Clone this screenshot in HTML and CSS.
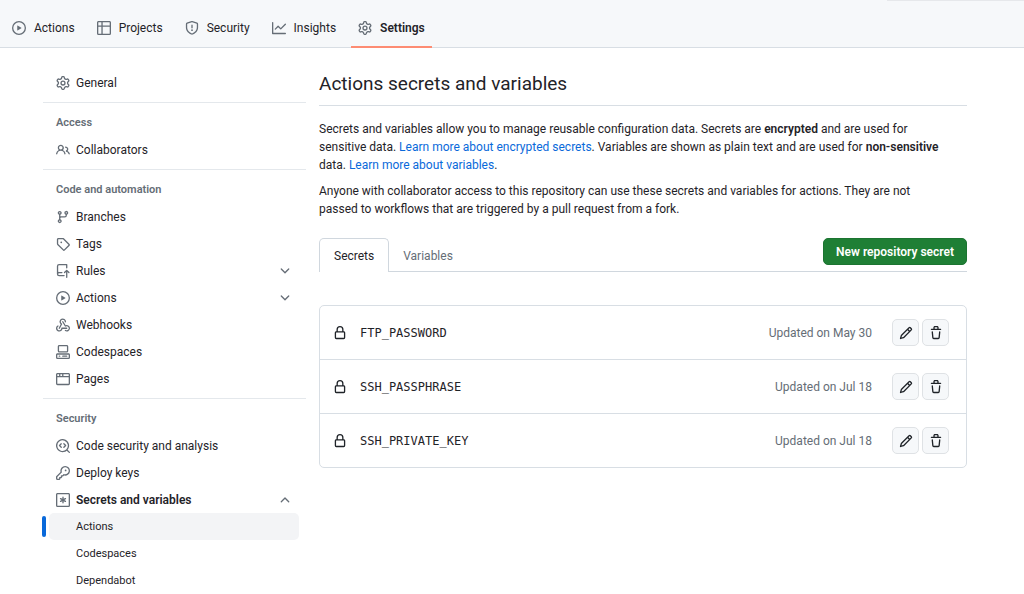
FILE: index.html
```
<!DOCTYPE html>
<html lang="en">
<head>
    <meta charset="UTF-8">
    <meta name="viewport" content="width=device-width, initial-scale=1.0">
    <title>Actions secrets and variables</title>
    <link rel="stylesheet" href="styles.css">
</head>
<body>
    <!-- icon sprite -->
    <svg class="sprite" aria-hidden="true">
        <symbol id="i-play" viewBox="0 0 16 16"><path d="M8 0a8 8 0 1 1 0 16A8 8 0 0 1 8 0ZM1.5 8a6.5 6.5 0 1 0 13 0 6.5 6.5 0 0 0-13 0Zm4.879-2.773 4.264 2.559a.25.25 0 0 1 0 .428l-4.264 2.559A.25.25 0 0 1 6 10.559V5.442a.25.25 0 0 1 .379-.215Z"/></symbol>
        <symbol id="i-table" viewBox="0 0 16 16"><path d="M0 1.75C0 .784.784 0 1.75 0h12.5C15.216 0 16 .784 16 1.75v12.5A1.75 1.75 0 0 1 14.25 16H1.75A1.75 1.75 0 0 1 0 14.25ZM6.5 6.5v8h7.75a.25.25 0 0 0 .25-.25V6.5Zm8-1.5V1.75a.25.25 0 0 0-.25-.25H6.5V5Zm-13 1.5v7.75c0 .138.112.25.25.25H5v-8ZM5 5V1.5H1.75a.25.25 0 0 0-.25.25V5Z"/></symbol>
        <symbol id="i-shield" viewBox="0 0 16 16"><path d="M7.467.133a1.748 1.748 0 0 1 1.066 0l5.25 1.68A1.75 1.75 0 0 1 15 3.48V7c0 1.566-.32 3.182-1.303 4.682-.983 1.498-2.585 2.813-5.032 3.855a1.697 1.697 0 0 1-1.33 0c-2.447-1.042-4.049-2.357-5.032-3.855C1.32 10.182 1 8.566 1 7V3.48a1.75 1.75 0 0 1 1.217-1.667Zm.61 1.429a.25.25 0 0 0-.153 0l-5.25 1.68a.25.25 0 0 0-.174.238V7c0 1.358.275 2.666 1.057 3.86.784 1.194 2.121 2.34 4.366 3.297a.196.196 0 0 0 .154 0c2.245-.956 3.582-2.104 4.366-3.298C13.225 9.666 13.5 8.36 13.5 7V3.48a.251.251 0 0 0-.174-.237l-5.25-1.68ZM8.75 4.75v3a.75.75 0 0 1-1.5 0v-3a.75.75 0 0 1 1.5 0ZM9 10.5a1 1 0 1 1-2 0 1 1 0 0 1 2 0Z"/></symbol>
        <symbol id="i-graph" viewBox="0 0 16 16"><path d="M1.5 1.75V13.5h13.75a.75.75 0 0 1 0 1.5H.75a.75.75 0 0 1-.75-.75V1.75a.75.75 0 0 1 1.5 0Zm14.28 2.53-5.25 5.25a.75.75 0 0 1-1.06 0L7 7.06 4.28 9.78a.751.751 0 0 1-1.042-.018.751.751 0 0 1-.018-1.042l3.25-3.25a.75.75 0 0 1 1.06 0L10 7.94l4.72-4.72a.751.751 0 0 1 1.042.018.751.751 0 0 1 .018 1.042Z"/></symbol>
        <symbol id="i-gear" viewBox="0 0 16 16"><path d="M8 0a8.2 8.2 0 0 1 .701.031C9.444.095 9.99.645 10.16 1.29l.288 1.107c.018.066.079.158.212.224.231.114.454.243.668.386.123.082.233.09.299.071l1.103-.303c.644-.176 1.392.021 1.82.63.27.385.506.792.704 1.218.315.675.111 1.422-.364 1.891l-.814.806c-.049.048-.098.147-.088.294.016.257.016.515 0 .772-.01.147.038.246.088.294l.814.806c.475.469.679 1.216.364 1.891a7.977 7.977 0 0 1-.704 1.217c-.428.61-1.176.807-1.82.63l-1.102-.302c-.067-.019-.177-.011-.3.071a5.909 5.909 0 0 1-.668.386c-.133.066-.194.158-.211.224l-.29 1.106c-.168.646-.715 1.196-1.458 1.26a8.006 8.006 0 0 1-1.402 0c-.743-.064-1.289-.614-1.458-1.26l-.289-1.106c-.018-.066-.079-.158-.212-.224a5.738 5.738 0 0 1-.668-.386c-.123-.082-.233-.09-.299-.071l-1.103.303c-.644.176-1.392-.021-1.82-.63a8.12 8.12 0 0 1-.704-1.218c-.315-.675-.111-1.422.363-1.891l.815-.806c.05-.048.098-.147.088-.294a6.214 6.214 0 0 1 0-.772c.01-.147-.038-.246-.088-.294l-.815-.806C.635 6.045.431 5.298.746 4.623a7.92 7.92 0 0 1 .704-1.217c.428-.61 1.176-.807 1.82-.63l1.102.302c.067.019.177.011.3-.071.214-.143.437-.272.668-.386.133-.066.194-.158.211-.224l.29-1.106C6.009.645 6.556.095 7.299.03 7.53.01 7.764 0 8 0Zm-.571 1.525c-.036.003-.108.036-.137.146l-.289 1.105c-.147.561-.549.967-.998 1.189-.173.086-.34.183-.5.29-.417.278-.97.423-1.529.27l-1.103-.303c-.109-.03-.175.016-.195.045-.22.312-.412.644-.573.99-.014.031-.021.11.059.19l.815.806c.411.406.562.957.53 1.456a4.709 4.709 0 0 0 0 .582c.032.499-.119 1.05-.53 1.456l-.815.806c-.081.08-.073.159-.059.19.162.346.353.677.573.989.02.03.085.076.195.046l1.102-.303c.56-.153 1.113-.008 1.53.27.161.107.328.204.501.29.447.222.85.629.997 1.189l.289 1.105c.029.109.101.143.137.146a6.6 6.6 0 0 0 1.142 0c.036-.003.108-.036.137-.146l.289-1.105c.147-.561.549-.967.998-1.189.173-.086.34-.183.5-.29.417-.278.97-.423 1.529-.27l1.103.303c.109.029.175-.016.195-.045.22-.313.411-.644.573-.99.014-.031.021-.11-.059-.19l-.815-.806c-.411-.406-.562-.957-.53-1.456a4.709 4.709 0 0 0 0-.582c-.032-.499.119-1.05.53-1.456l.815-.806c.081-.08.073-.159.059-.19a6.464 6.464 0 0 0-.573-.989c-.02-.03-.085-.076-.195-.046l-1.102.303c-.56.153-1.113.008-1.53-.27a4.44 4.44 0 0 0-.501-.29c-.447-.222-.85-.629-.997-1.189l-.289-1.105c-.029-.11-.101-.143-.137-.146a6.6 6.6 0 0 0-1.142 0ZM11 8a3 3 0 1 1-6 0 3 3 0 0 1 6 0ZM9.5 8a1.5 1.5 0 1 0-3.001.001A1.5 1.5 0 0 0 9.5 8Z"/></symbol>
        <symbol id="i-people" viewBox="0 0 16 16"><path d="M2 5.5a3.5 3.5 0 1 1 5.898 2.549 5.508 5.508 0 0 1 3.034 4.084.75.75 0 1 1-1.482.235 4 4 0 0 0-7.9 0 .75.75 0 0 1-1.482-.236A5.507 5.507 0 0 1 3.102 8.05 3.493 3.493 0 0 1 2 5.5ZM11 4a3.001 3.001 0 0 1 2.22 5.018 5.01 5.01 0 0 1 2.56 3.012.749.749 0 0 1-.885.954.752.752 0 0 1-.549-.514 3.507 3.507 0 0 0-2.522-2.372.75.75 0 0 1-.574-.73v-.352a.75.75 0 0 1 .416-.672A1.5 1.5 0 0 0 11 5.5.75.75 0 0 1 11 4Zm-5.5-.5a2 2 0 1 0-.001 3.999A2 2 0 0 0 5.5 3.5Z"/></symbol>
        <symbol id="i-branch" viewBox="0 0 16 16"><path d="M9.5 3.25a2.25 2.25 0 1 1 3 2.122V6A2.5 2.5 0 0 1 10 8.5H6a1 1 0 0 0-1 1v1.128a2.251 2.251 0 1 1-1.5 0V5.372a2.25 2.25 0 1 1 1.5 0v1.836A2.493 2.493 0 0 1 6 7h4a1 1 0 0 0 1-1v-.628A2.25 2.25 0 0 1 9.5 3.25Zm-6 0a.75.75 0 1 0 1.5 0 .75.75 0 0 0-1.5 0Zm8.25-.75a.75.75 0 1 0 0 1.5.75.75 0 0 0 0-1.5ZM4.25 12a.75.75 0 1 0 0 1.5.75.75 0 0 0 0-1.5Z"/></symbol>
        <symbol id="i-tag" viewBox="0 0 16 16"><path d="M1 7.775V2.75C1 1.784 1.784 1 2.75 1h5.025c.464 0 .91.184 1.238.513l6.25 6.25a1.75 1.75 0 0 1 0 2.474l-5.026 5.026a1.75 1.75 0 0 1-2.474 0l-6.25-6.25A1.752 1.752 0 0 1 1 7.775Zm1.5 0c0 .066.026.13.073.177l6.25 6.25a.25.25 0 0 0 .354 0l5.025-5.025a.25.25 0 0 0 0-.354l-6.25-6.25a.25.25 0 0 0-.177-.073H2.75a.25.25 0 0 0-.25.25ZM6 5a1 1 0 1 1 0 2 1 1 0 0 1 0-2Z"/></symbol>
        <symbol id="i-rules" viewBox="0 0 16 16"><path d="M1 2.5A2.5 2.5 0 0 1 3.5 0h8.75a.75.75 0 0 1 .75.75v3.5a.75.75 0 0 1-1.5 0V1.5h-8a1 1 0 0 0-1 1v6.708A2.493 2.493 0 0 1 3.5 9h3.25a.75.75 0 0 1 0 1.5H3.5a1 1 0 0 0 0 2h5.75a.75.75 0 0 1 0 1.5H3.5A2.5 2.5 0 0 1 1 11.5Zm13.23 7.79-.001.001-1.224-1.224v6.184a.75.75 0 0 1-1.5 0V9.066L10.28 10.29a.75.75 0 0 1-1.06-1.061l2.505-2.504a.75.75 0 0 1 1.06 0L15.29 9.23a.751.751 0 0 1-.018 1.042.751.751 0 0 1-1.042.018Z"/></symbol>
        <symbol id="i-webhook" viewBox="0 0 16 16"><path d="M5.5 4.25a2.25 2.25 0 0 1 4.5 0 .75.75 0 0 0 1.5 0 3.75 3.75 0 1 0-6.14 2.889l-2.272 4.258a.75.75 0 0 0 1.324.706L7 7.25a.75.75 0 0 0-.309-1.015A2.25 2.25 0 0 1 5.5 4.25Z"/><path d="M7.364 3.607a.75.75 0 0 1 1.03.257l2.608 4.349a3.75 3.75 0 1 1-.628 6.785.75.75 0 0 1 .752-1.299 2.25 2.25 0 1 0-.033-3.88.75.75 0 0 1-1.03-.256L7.107 4.636a.75.75 0 0 1 .257-1.03Z"/><path d="M2.9 8.776A.75.75 0 0 1 2.625 9.8 2.25 2.25 0 1 0 6 11.75a.75.75 0 0 1 .75-.751h5.5a.75.75 0 0 1 0 1.5H7.425a3.751 3.751 0 1 1-5.55-3.998.75.75 0 0 1 1.024.274Z"/></symbol>
        <symbol id="i-codespaces" viewBox="0 0 16 16"><path d="M0 11.25c0-.966.784-1.75 1.75-1.75h12.5c.966 0 1.75.784 1.75 1.75v3A1.75 1.75 0 0 1 14.25 16H1.75A1.75 1.75 0 0 1 0 14.25Zm2-9.5C2 .784 2.784 0 3.75 0h8.5C13.216 0 14 .784 14 1.75v5a1.75 1.75 0 0 1-1.75 1.75h-8.5A1.75 1.75 0 0 1 2 6.75Zm1.75-.25a.25.25 0 0 0-.25.25v5c0 .138.112.25.25.25h8.5a.25.25 0 0 0 .25-.25v-5a.25.25 0 0 0-.25-.25Zm-2 9.5a.25.25 0 0 0-.25.25v3c0 .138.112.25.25.25h12.5a.25.25 0 0 0 .25-.25v-3a.25.25 0 0 0-.25-.25Z"/><path d="M7 12.75a.75.75 0 0 1 .75-.75h4.5a.75.75 0 0 1 0 1.5h-4.5a.75.75 0 0 1-.75-.75Zm-4 0a.75.75 0 0 1 .75-.75h.5a.75.75 0 0 1 0 1.5h-.5a.75.75 0 0 1-.75-.75Z"/></symbol>
        <symbol id="i-browser" viewBox="0 0 16 16"><path d="M0 2.75C0 1.784.784 1 1.75 1h12.5c.966 0 1.75.784 1.75 1.75v10.5A1.75 1.75 0 0 1 14.25 15H1.75A1.75 1.75 0 0 1 0 13.25ZM14.5 6h-13v7.25c0 .138.112.25.25.25h12.5a.25.25 0 0 0 .25-.25Zm-6-3.5v2h6V2.75a.25.25 0 0 0-.25-.25ZM5 2.5v2h2v-2Zm-3.25 0a.25.25 0 0 0-.25.25V4.5h2v-2Z"/></symbol>
        <symbol id="i-codescan" viewBox="0 0 16 16"><path d="M8.47 4.97a.75.75 0 0 0 0 1.06L9.94 7.5 8.47 8.97a.75.75 0 1 0 1.06 1.06l2-2a.75.75 0 0 0 0-1.06l-2-2a.75.75 0 0 0-1.06 0ZM6.53 6.03a.75.75 0 0 0-1.06-1.06l-2 2a.75.75 0 0 0 0 1.06l2 2a.75.75 0 1 0 1.06-1.06L5.06 7.5l1.47-1.47Z"/><path d="M12.246 13.307a7.501 7.501 0 1 1 1.06-1.06l2.474 2.473a.749.749 0 1 1-1.06 1.06ZM1.5 7.5a6.002 6.002 0 0 0 3.608 5.504 6.002 6.002 0 0 0 6.486-1.117.748.748 0 0 1 .292-.293A6 6 0 1 0 1.5 7.5Z"/></symbol>
        <symbol id="i-key" viewBox="0 0 16 16"><path d="M10.5 0a5.499 5.499 0 1 1-1.288 10.848l-.932.932a.749.749 0 0 1-.53.22H7v.75a.749.749 0 0 1-.22.53l-.5.5a.749.749 0 0 1-.53.22H5v.75a.749.749 0 0 1-.22.53l-.5.5a.749.749 0 0 1-.53.22h-2A1.75 1.75 0 0 1 0 14.25v-2c0-.199.079-.389.22-.53l4.932-4.932A5.5 5.5 0 0 1 10.5 0Zm-4 5.5c-.001.431.069.86.205 1.269a.75.75 0 0 1-.181.768L1.5 12.56v1.69c0 .138.112.25.25.25h1.69l.06-.06v-1.19a.75.75 0 0 1 .75-.75h1.19l.06-.06v-1.19a.75.75 0 0 1 .75-.75h1.19l1.023-1.025a.75.75 0 0 1 .768-.18A4 4 0 1 0 6.5 5.5ZM11 6a1 1 0 1 1 0-2 1 1 0 0 1 0 2Z"/></symbol>
        <symbol id="i-asterisk" viewBox="0 0 16 16"><path fill-rule="evenodd" d="M0 1.75C0 .784.784 0 1.75 0h12.5C15.216 0 16 .784 16 1.75v12.5A1.75 1.75 0 0 1 14.25 16H1.75A1.75 1.75 0 0 1 0 14.25ZM1.75 1.5a.25.25 0 0 0-.25.25v12.5c0 .138.112.25.25.25h12.5a.25.25 0 0 0 .25-.25V1.75a.25.25 0 0 0-.25-.25Z"/><path d="M8 4a.75.75 0 0 1 .75.75V6.7l1.69-.975a.75.75 0 0 1 .75 1.3L9.5 8l1.69.976a.75.75 0 0 1-.75 1.298L8.75 9.3v1.951a.75.75 0 0 1-1.5 0V9.299l-1.69.976a.75.75 0 0 1-.75-1.3L6.5 8l-1.69-.975a.75.75 0 0 1 .75-1.3l1.69.976V4.75A.75.75 0 0 1 8 4Z"/></symbol>
        <symbol id="i-down" viewBox="0 0 16 16"><path d="M12.78 5.22a.749.749 0 0 1 0 1.06l-4.25 4.25a.749.749 0 0 1-1.06 0L3.22 6.28a.749.749 0 1 1 1.06-1.06L8 8.939l3.72-3.719a.749.749 0 0 1 1.06 0Z"/></symbol>
        <symbol id="i-up" viewBox="0 0 16 16"><path d="M3.22 10.53a.749.749 0 0 1 0-1.06l4.25-4.25a.749.749 0 0 1 1.06 0l4.25 4.25a.749.749 0 1 1-1.06 1.06L8 6.811 4.28 10.53a.749.749 0 0 1-1.06 0Z"/></symbol>
        <symbol id="i-lock" viewBox="0 0 16 16"><path d="M4 4a4 4 0 0 1 8 0v2h.25c.966 0 1.75.784 1.75 1.75v5.5A1.75 1.75 0 0 1 12.25 15h-8.5A1.75 1.75 0 0 1 2 13.25v-5.5C2 6.784 2.784 6 3.75 6H4Zm8.25 3.5h-8.5a.25.25 0 0 0-.25.25v5.5c0 .138.112.25.25.25h8.5a.25.25 0 0 0 .25-.25v-5.5a.25.25 0 0 0-.25-.25ZM10.5 6V4a2.5 2.5 0 1 0-5 0v2Z"/></symbol>
        <symbol id="i-pencil" viewBox="0 0 16 16"><path d="M11.013 1.427a1.75 1.75 0 0 1 2.474 0l1.086 1.086a1.75 1.75 0 0 1 0 2.474l-8.61 8.61c-.21.21-.47.364-.756.445l-3.251.93a.75.75 0 0 1-.927-.928l.929-3.25c.081-.286.235-.547.445-.758l8.61-8.61Zm.176 4.823L9.75 4.81l-6.286 6.287a.253.253 0 0 0-.064.108l-.558 1.953 1.953-.558a.253.253 0 0 0 .108-.064Zm1.238-3.763a.25.25 0 0 0-.354 0L10.811 3.75l1.439 1.44 1.263-1.263a.25.25 0 0 0 0-.354Z"/></symbol>
        <symbol id="i-trash" viewBox="0 0 16 16"><path d="M11 1.75V3h2.25a.75.75 0 0 1 0 1.5H2.75a.75.75 0 0 1 0-1.5H5V1.75C5 .784 5.784 0 6.75 0h2.5C10.216 0 11 .784 11 1.75ZM4.496 6.675l.66 6.6a.25.25 0 0 0 .249.225h5.19a.25.25 0 0 0 .249-.225l.66-6.6a.75.75 0 0 1 1.492.149l-.66 6.6A1.748 1.748 0 0 1 10.595 15h-5.19a1.75 1.75 0 0 1-1.741-1.575l-.66-6.6a.75.75 0 1 1 1.492-.15ZM6.5 1.75V3h3V1.75a.25.25 0 0 0-.25-.25h-2.5a.25.25 0 0 0-.25.25Z"/></symbol>
    </svg>

    <header class="topbar">
        <nav class="repo-nav">
            <a href="#"><svg class="icon"><use href="#i-play"/></svg>Actions</a>
            <a href="#"><svg class="icon"><use href="#i-table"/></svg>Projects</a>
            <a href="#"><svg class="icon"><use href="#i-shield"/></svg>Security</a>
            <a href="#"><svg class="icon"><use href="#i-graph"/></svg>Insights</a>
            <a href="#" class="selected"><svg class="icon"><use href="#i-gear"/></svg>Settings</a>
        </nav>
    </header>

    <div class="layout">
        <nav class="sidebar">
            <div class="group">
                <a href="#" class="item"><svg class="icon"><use href="#i-gear"/></svg>General</a>
            </div>
            <div class="group">
                <h3>Access</h3>
                <a href="#" class="item"><svg class="icon"><use href="#i-people"/></svg>Collaborators</a>
            </div>
            <div class="group">
                <h3>Code and automation</h3>
                <a href="#" class="item"><svg class="icon"><use href="#i-branch"/></svg>Branches</a>
                <a href="#" class="item"><svg class="icon"><use href="#i-tag"/></svg>Tags</a>
                <button type="button" class="item"><svg class="icon"><use href="#i-rules"/></svg>Rules<svg class="icon chevron"><use href="#i-down"/></svg></button>
                <button type="button" class="item"><svg class="icon"><use href="#i-play"/></svg>Actions<svg class="icon chevron"><use href="#i-down"/></svg></button>
                <a href="#" class="item"><svg class="icon"><use href="#i-webhook"/></svg>Webhooks</a>
                <a href="#" class="item"><svg class="icon"><use href="#i-codespaces"/></svg>Codespaces</a>
                <a href="#" class="item"><svg class="icon"><use href="#i-browser"/></svg>Pages</a>
            </div>
            <div class="group">
                <h3>Security</h3>
                <a href="#" class="item"><svg class="icon"><use href="#i-codescan"/></svg>Code security and analysis</a>
                <a href="#" class="item"><svg class="icon"><use href="#i-key"/></svg>Deploy keys</a>
                <button type="button" class="item open"><svg class="icon"><use href="#i-asterisk"/></svg>Secrets and variables<svg class="icon chevron"><use href="#i-up"/></svg></button>
                <a href="#" class="item sub current">Actions</a>
                <a href="#" class="item sub">Codespaces</a>
                <a href="#" class="item sub">Dependabot</a>
            </div>
        </nav>

        <main class="content">
            <h1>Actions secrets and variables</h1>
            <p>Secrets and variables allow you to manage reusable configuration data. Secrets are <strong>encrypted</strong> and are used for sensitive data. <a href="#">Learn more about encrypted secrets</a>. Variables are shown as plain text and are used for <strong>non-sensitive</strong> data. <a href="#">Learn more about variables</a>.</p>
            <p>Anyone with collaborator access to this repository can use these secrets and variables for actions. They are not passed to workflows that are triggered by a pull request from a fork.</p>

            <div class="tabs">
                <a href="#" class="tab active">Secrets</a>
                <a href="#" class="tab">Variables</a>
                <button type="button" class="btn-primary">New repository secret</button>
            </div>

            <ul class="secrets">
                <li>
                    <svg class="icon"><use href="#i-lock"/></svg>
                    <code>FTP_PASSWORD</code>
                    <span class="updated">Updated on May 30</span>
                    <div class="actions">
                        <button type="button" aria-label="Edit FTP_PASSWORD"><svg class="icon"><use href="#i-pencil"/></svg></button>
                        <button type="button" aria-label="Delete FTP_PASSWORD"><svg class="icon"><use href="#i-trash"/></svg></button>
                    </div>
                </li>
                <li>
                    <svg class="icon"><use href="#i-lock"/></svg>
                    <code>SSH_PASSPHRASE</code>
                    <span class="updated">Updated on Jul 18</span>
                    <div class="actions">
                        <button type="button" aria-label="Edit SSH_PASSPHRASE"><svg class="icon"><use href="#i-pencil"/></svg></button>
                        <button type="button" aria-label="Delete SSH_PASSPHRASE"><svg class="icon"><use href="#i-trash"/></svg></button>
                    </div>
                </li>
                <li>
                    <svg class="icon"><use href="#i-lock"/></svg>
                    <code>SSH_PRIVATE_KEY</code>
                    <span class="updated">Updated on Jul 18</span>
                    <div class="actions">
                        <button type="button" aria-label="Edit SSH_PRIVATE_KEY"><svg class="icon"><use href="#i-pencil"/></svg></button>
                        <button type="button" aria-label="Delete SSH_PRIVATE_KEY"><svg class="icon"><use href="#i-trash"/></svg></button>
                    </div>
                </li>
            </ul>
        </main>
    </div>
</body>
</html>
```
FILE: styles.css
```
* {
    box-sizing: border-box;
}
body {
    margin: 0;
    font-family: Roboto, "Liberation Sans", sans-serif;
    font-size: 12px;
    line-height: 18px;
    color: #1f2328;
    background: #fff;
}
a {
    color: #0969da;
    text-decoration: none;
}
button {
    font: inherit;
    color: inherit;
    cursor: pointer;
}
strong {
    font-weight: 600;
}
.sprite {
    display: none;
}
.icon {
    width: 14px;
    height: 14px;
    flex: none;
    fill: #656d76;
}

/* repository navigation */
.topbar {
    height: 48px;
    background: linear-gradient(#e6e8eb, #e6e8eb) right top / 137px 1px no-repeat #f6f8fa;
    border-bottom: 1px solid #d8dee4;
}
.repo-nav {
    display: flex;
    gap: 8px;
    height: 48px;
    padding: 10px 5px 0;
}
.repo-nav a {
    display: flex;
    align-items: center;
    gap: 8px;
    padding: 0 7px;
    color: #1f2328;
    border-bottom: 2px solid transparent;
}
.repo-nav .selected {
    font-weight: 600;
    border-bottom-color: #fd8c73;
}

.layout {
    display: grid;
    grid-template-columns: 263px 1fr;
    gap: 13px;
    padding: 21px 57px 0 43px;
}

/* settings menu */
.group + .group {
    margin-top: 6px;
    padding-top: 6px;
    border-top: 1px solid #e4e8ec;
}
.group h3 {
    margin: 0;
    padding: 5px 13px 4px;
    font-size: 11px;
    font-weight: 600;
    color: #656d76;
}
.item {
    display: flex;
    align-items: center;
    gap: 6px;
    width: 250px;
    height: 27px;
    margin: 0 6px;
    padding: 0 7px;
    color: #1f2328;
    background: none;
    border: none;
    border-radius: 5px;
}
.chevron {
    margin-left: auto;
}
.open {
    font-weight: 600;
}
.sub {
    padding-left: 27px;
    font-size: 11px;
}
.current {
    position: relative;
    background: #f3f4f6;
}
.current::before {
    content: "";
    position: absolute;
    top: 3px;
    bottom: 3px;
    left: -7px;
    width: 4px;
    border-radius: 5px;
    background: #0969da;
}

/* page content */
.content h1 {
    margin: 0 0 14px;
    padding-bottom: 6px;
    font-size: 19px;
    line-height: 30px;
    font-weight: 400;
    border-bottom: 1px solid #d8dee4;
}
.content p {
    margin: 0 0 8px;
    padding-right: 18px;
}
.tabs {
    display: flex;
    align-items: flex-start;
    margin: 20px 0 33px;
    height: 34px;
    box-shadow: inset 0 -1px #d0d7de;
}
.tab {
    height: 34px;
    padding: 9px 14px;
    color: #656d76;
}
.tab.active {
    padding: 8px 14px;
    color: #1f2328;
    background: #fff;
    border: 1px solid #d0d7de;
    border-bottom: none;
    border-radius: 5px 5px 0 0;
}
.btn-primary {
    height: 27px;
    margin-left: auto;
    padding: 0 12px;
    font-weight: 600;
    color: #fff;
    background: #1f7f35;
    border: 1px solid #1c7431;
    border-radius: 5px;
}
.secrets {
    margin: 0;
    padding: 0;
    list-style: none;
    border: 1px solid #d8dee4;
    border-radius: 5px;
}
.secrets li {
    display: flex;
    align-items: center;
    padding: 13px 17px 13px 13px;
}
.secrets li + li {
    border-top: 1px solid #d8dee4;
}
.secrets code {
    margin-left: 13px;
    font-family: "DejaVu Sans Mono", monospace;
}
.secrets .icon {
    fill: #1f2328;
}
.updated {
    margin-left: auto;
    color: #656d76;
}
.actions {
    display: flex;
    gap: 3px;
    margin-left: 20px;
}
.actions button {
    display: flex;
    align-items: center;
    justify-content: center;
    width: 27px;
    height: 27px;
    padding: 0;
    background: #f6f8fa;
    border: 1px solid #dfe2e5;
    border-radius: 5px;
}
```
